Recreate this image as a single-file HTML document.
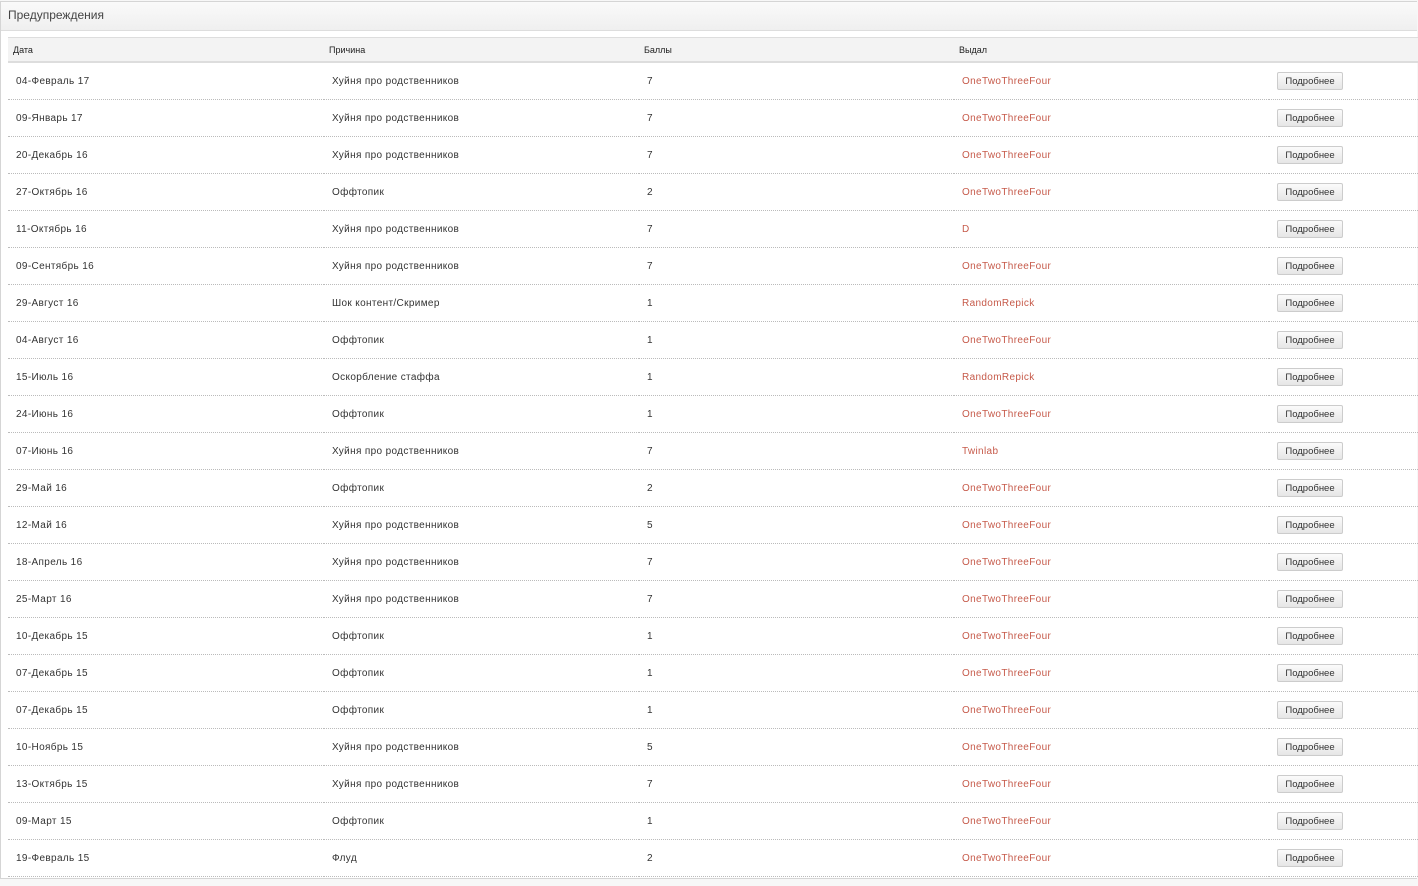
<!DOCTYPE html>
<html><head><meta charset="utf-8"><style>
body{margin:0;background:#f7f7f7;font-family:"Liberation Sans",Arial,sans-serif;width:1418px;height:886px;overflow:hidden}
.panel{position:absolute;left:0;top:1px;width:1416px;height:876px;background:#fff;border:1px solid #d5d5d5;border-right:none}
.hd{height:28px;background:linear-gradient(#fafafa,#efefef);border-bottom:1px solid #ddd;font-size:12px;color:#444;line-height:27px;padding-left:7px}
table{position:absolute;left:8px;top:37px;width:1410px;border-collapse:collapse;font-size:10px;letter-spacing:.35px;color:#333}
th{height:23px;background:#f3f3f3;border-top:1px solid #ddd;border-bottom:2px solid #ddd;text-align:left;font-weight:normal;font-size:9px;letter-spacing:0;color:#222;padding:0 0 0 5px}
td{height:36px;border-bottom:1px dotted #bbb;padding:0 0 0 8px}
td.r{color:#c65a4a}
.b{display:inline-block;width:64px;height:16px;border:1px solid #ccc;border-radius:2px;background:linear-gradient(#fbfbfb,#e6e6e6);font-size:9.5px;letter-spacing:0;text-align:center;line-height:17px;color:#333}
</style></head><body>
<div class="panel"><div class="hd">Предупреждения</div></div>
<table>
<colgroup><col style="width:316px"><col style="width:315px"><col style="width:315px"><col style="width:315px"><col></colgroup>
<tr><th>Дата</th><th>Причина</th><th>Баллы</th><th>Выдал</th><th></th></tr>
<tr><td>04-Февраль 17</td><td>Хуйня про родственников</td><td>7</td><td class="r">OneTwoThreeFour</td><td><span class="b">Подробнее</span></td></tr>
<tr><td>09-Январь 17</td><td>Хуйня про родственников</td><td>7</td><td class="r">OneTwoThreeFour</td><td><span class="b">Подробнее</span></td></tr>
<tr><td>20-Декабрь 16</td><td>Хуйня про родственников</td><td>7</td><td class="r">OneTwoThreeFour</td><td><span class="b">Подробнее</span></td></tr>
<tr><td>27-Октябрь 16</td><td>Оффтопик</td><td>2</td><td class="r">OneTwoThreeFour</td><td><span class="b">Подробнее</span></td></tr>
<tr><td>11-Октябрь 16</td><td>Хуйня про родственников</td><td>7</td><td class="r">D</td><td><span class="b">Подробнее</span></td></tr>
<tr><td>09-Сентябрь 16</td><td>Хуйня про родственников</td><td>7</td><td class="r">OneTwoThreeFour</td><td><span class="b">Подробнее</span></td></tr>
<tr><td>29-Август 16</td><td>Шок контент/Скример</td><td>1</td><td class="r">RandomRepick</td><td><span class="b">Подробнее</span></td></tr>
<tr><td>04-Август 16</td><td>Оффтопик</td><td>1</td><td class="r">OneTwoThreeFour</td><td><span class="b">Подробнее</span></td></tr>
<tr><td>15-Июль 16</td><td>Оскорбление стаффа</td><td>1</td><td class="r">RandomRepick</td><td><span class="b">Подробнее</span></td></tr>
<tr><td>24-Июнь 16</td><td>Оффтопик</td><td>1</td><td class="r">OneTwoThreeFour</td><td><span class="b">Подробнее</span></td></tr>
<tr><td>07-Июнь 16</td><td>Хуйня про родственников</td><td>7</td><td class="r">Twinlab</td><td><span class="b">Подробнее</span></td></tr>
<tr><td>29-Май 16</td><td>Оффтопик</td><td>2</td><td class="r">OneTwoThreeFour</td><td><span class="b">Подробнее</span></td></tr>
<tr><td>12-Май 16</td><td>Хуйня про родственников</td><td>5</td><td class="r">OneTwoThreeFour</td><td><span class="b">Подробнее</span></td></tr>
<tr><td>18-Апрель 16</td><td>Хуйня про родственников</td><td>7</td><td class="r">OneTwoThreeFour</td><td><span class="b">Подробнее</span></td></tr>
<tr><td>25-Март 16</td><td>Хуйня про родственников</td><td>7</td><td class="r">OneTwoThreeFour</td><td><span class="b">Подробнее</span></td></tr>
<tr><td>10-Декабрь 15</td><td>Оффтопик</td><td>1</td><td class="r">OneTwoThreeFour</td><td><span class="b">Подробнее</span></td></tr>
<tr><td>07-Декабрь 15</td><td>Оффтопик</td><td>1</td><td class="r">OneTwoThreeFour</td><td><span class="b">Подробнее</span></td></tr>
<tr><td>07-Декабрь 15</td><td>Оффтопик</td><td>1</td><td class="r">OneTwoThreeFour</td><td><span class="b">Подробнее</span></td></tr>
<tr><td>10-Ноябрь 15</td><td>Хуйня про родственников</td><td>5</td><td class="r">OneTwoThreeFour</td><td><span class="b">Подробнее</span></td></tr>
<tr><td>13-Октябрь 15</td><td>Хуйня про родственников</td><td>7</td><td class="r">OneTwoThreeFour</td><td><span class="b">Подробнее</span></td></tr>
<tr><td>09-Март 15</td><td>Оффтопик</td><td>1</td><td class="r">OneTwoThreeFour</td><td><span class="b">Подробнее</span></td></tr>
<tr><td>19-Февраль 15</td><td>Флуд</td><td>2</td><td class="r">OneTwoThreeFour</td><td><span class="b">Подробнее</span></td></tr>
</table>
</body></html>
